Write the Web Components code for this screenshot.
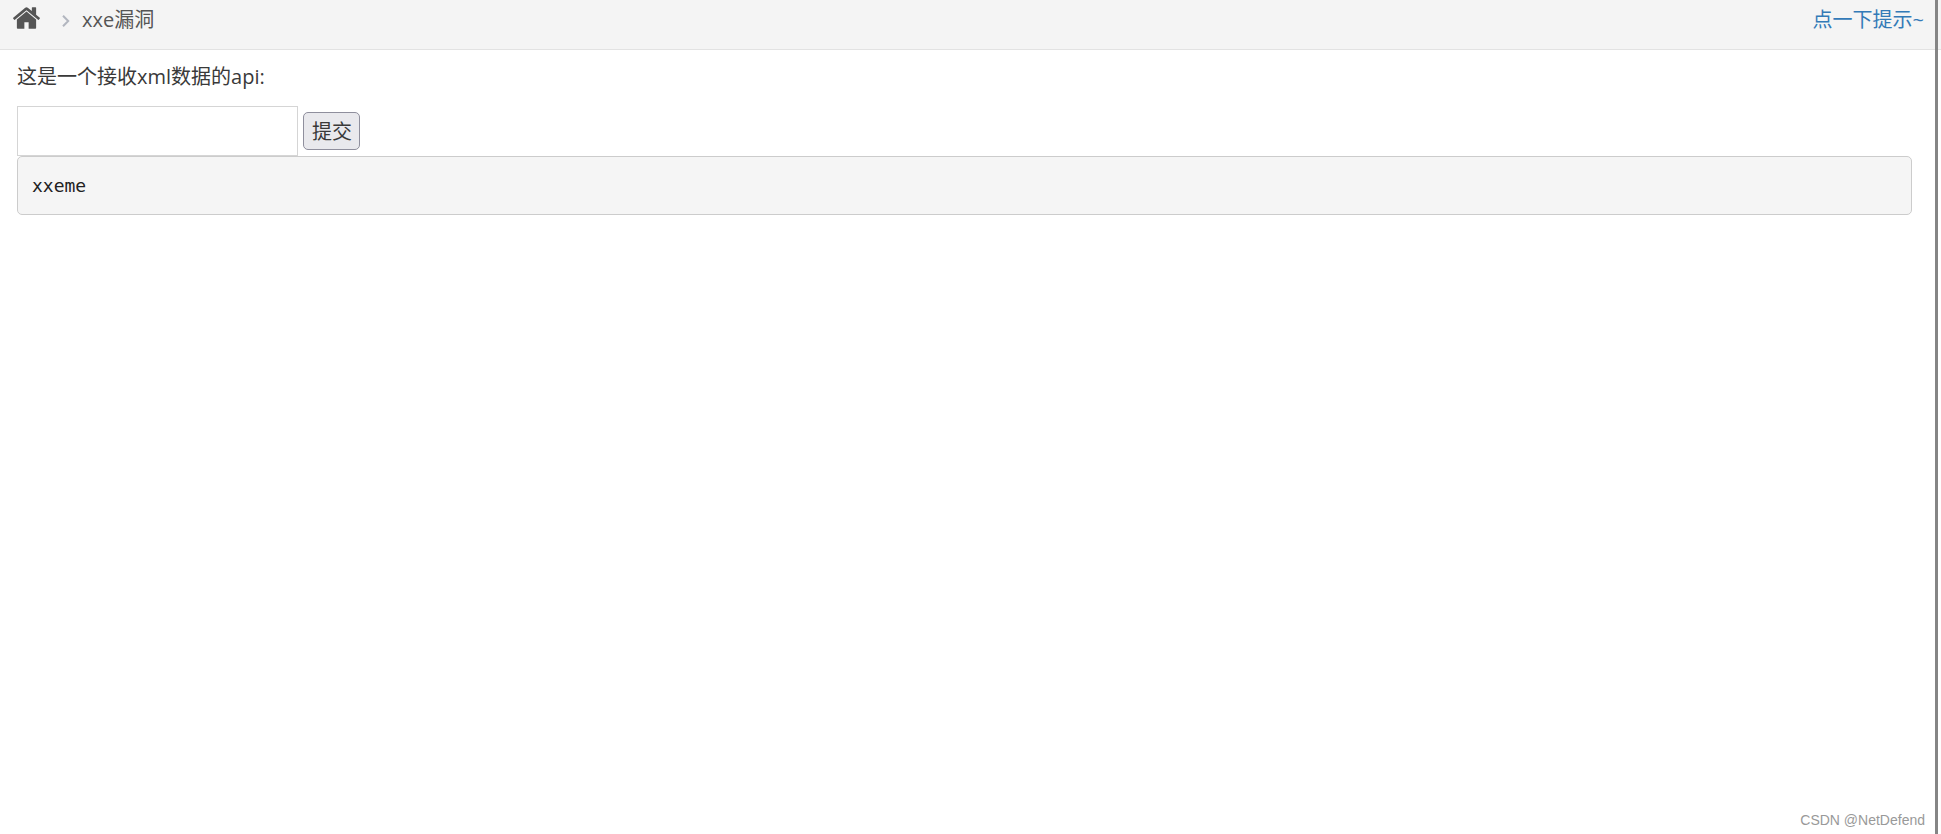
<!DOCTYPE html>
<html lang="zh-CN">
<head>
<meta charset="utf-8">
<title>xxe漏洞</title>
<style>
body { margin: 0; background: #fff; color: #393939; font: 20px/30px "Open Sans", "Noto Sans CJK SC", sans-serif; }
</style>
</head>
<body>
<app-shell>
  <crumb-bar slot="bar">xxe漏洞</crumb-bar>
  <api-form>这是一个接收xml数据的api:</api-form>
  <result-box>xxeme</result-box>
  <page-credit slot="credit">CSDN @NetDefend</page-credit>
</app-shell>
<script>
function define(name, html) {
  customElements.define(name, class extends HTMLElement {
    constructor() {
      super();
      this.attachShadow({ mode: "open" }).innerHTML = html;
    }
  });
}

define("app-shell", `
<style>
:host { display: grid; grid-template-columns: 1fr 3px 3px; min-height: 100vh; }
.page { display: flex; flex-direction: column; min-width: 0; }
main { flex: 1; padding: 12px 23px 0 17px; }
.rail { background: #858585; }
.edge { background: linear-gradient(#f4f4f4 49px, #e2e2e2 49px 50px, #fff 50px); }
</style>
<div class="page"><slot name="bar"></slot><main><slot></slot></main><slot name="credit"></slot></div>
<div class="rail"></div><div class="edge"></div>`);

define("crumb-bar", `
<style>
:host { display: flex; justify-content: space-between; box-sizing: border-box; height: 50px; padding: 5px 11px 0 13px; background: #f4f4f4; border-bottom: 1px solid #e2e2e2; color: #555; }
nav { display: flex; align-items: center; height: 30px; }
a { color: #337ab7; text-decoration: none; }
.home { display: flex; margin-bottom: 4px; color: #555; }
svg { display: block; }
.sep { margin: 2px 12px 0 22px; }
</style>
<nav>
  <a class="home" href="#" aria-label="首页"><svg width="27" height="22" viewBox="24 253 1616 1283" fill="currentColor"><path d="M1408 992v480q0 26-19 45t-45 19h-384v-384h-256v384h-384q-26 0-45-19t-19-45v-480q0-1 .5-3t.5-3l575-474 575 474q1 2 1 6zm223-69l-62 74q-8 9-21 11h-3q-13 0-21-7l-692-577-692 577q-12 8-24 7-13-2-21-11l-62-74q-8-10-7-23.5t11-21.5l719-599q32-26 76-26t76 26l244 204v-195q0-14 9-23t23-9h192q14 0 23 9t9 23v408l219 182q10 8 11 21.5t-7 23.5z"/></svg></a>
  <svg class="sep" width="8" height="12" viewBox="0 0 8 12" fill="none" stroke="#b2b6bf" stroke-width="2"><path d="M1 .8L6.2 6 1 11.2"/></svg>
  <slot></slot>
</nav>
<a href="#">点一下提示~</a>`);

define("api-form", `
<style>
:host { display: block; }
form { display: flex; flex-wrap: wrap; align-items: center; column-gap: 5px; }
label { flex: 0 0 100%; margin-bottom: 14px; }
input { box-sizing: border-box; width: 281px; height: 50px; margin: 0; padding: 6px; border: 1px solid #d5d5d5; background: #fff; font: inherit; color: inherit; }
button { box-sizing: border-box; height: 38px; padding: 2px 7px 0 8px; border: 1px solid #8f8f9d; border-radius: 5px; background: #e9e9ed; color: #393939; font: inherit; }
</style>
<form>
  <label for="xml"><slot></slot></label>
  <input id="xml" type="text" name="xml">
  <button type="button">提交</button>
</form>`);

define("result-box", `
<style>
:host { display: block; }
pre { margin: 0; padding: 14px; border: 1px solid #ccc; border-radius: 5px; background: #f5f5f5; color: #222; font: 18px/29px "DejaVu Sans Mono", monospace; }
</style>
<pre><slot></slot></pre>`);

define("page-credit", `
<style>
:host { display: block; padding: 0 10px 4px; text-align: right; color: #999; font: 14px/20px "Liberation Sans", Arial, sans-serif; }
</style>
<slot></slot>`);
</script>
</body>
</html>
